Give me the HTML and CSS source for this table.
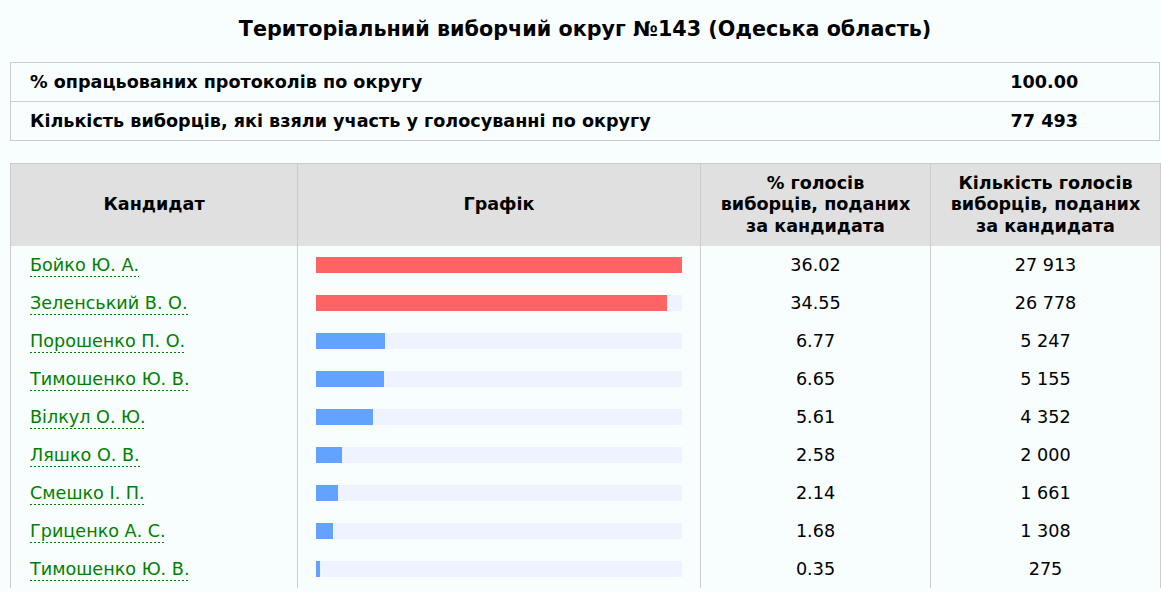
FILE: index.html
```html
<!DOCTYPE html>
<html lang="uk">
<head>
<meta charset="utf-8">
<title>Територіальний виборчий округ №143</title>
<link rel="stylesheet" href="styles.css">
</head>
<body>
<div class="page">
  <h1 class="title">Територіальний виборчий округ №143 (Одеська область)</h1>
  <table class="summary">
    <colgroup><col class="col-label"><col class="col-value"></colgroup>
    <tr><td class="s-label">% опрацьованих протоколів по округу</td><td class="s-value">100.00</td></tr>
    <tr><td class="s-label">Кількість виборців, які взяли участь у голосуванні по округу</td><td class="s-value">77 493</td></tr>
  </table>
  <table class="results">
    <colgroup>
      <col class="col-name">
      <col class="col-chart">
      <col class="col-pct">
      <col class="col-cnt">
    </colgroup>
    <thead>
      <tr>
        <th>Кандидат</th>
        <th>Графік</th>
        <th>% голосів<br>виборців, поданих<br>за кандидата</th>
        <th>Кількість голосів<br>виборців, поданих<br>за кандидата</th>
      </tr>
    </thead>
    <tbody>
      <tr><td class="c-name"><a class="cand">Бойко Ю. А.</a></td><td class="c-chart"><div class="track"><div class="fill red" style="width:100%"></div></div></td><td>36.02</td><td>27 913</td></tr>
      <tr><td class="c-name"><a class="cand">Зеленський В. О.</a></td><td class="c-chart"><div class="track"><div class="fill red" style="width:95.92%"></div></div></td><td>34.55</td><td>26 778</td></tr>
      <tr><td class="c-name"><a class="cand">Порошенко П. О.</a></td><td class="c-chart"><div class="track"><div class="fill blue" style="width:18.8%"></div></div></td><td>6.77</td><td>5 247</td></tr>
      <tr><td class="c-name"><a class="cand">Тимошенко Ю. В.</a></td><td class="c-chart"><div class="track"><div class="fill blue" style="width:18.46%"></div></div></td><td>6.65</td><td>5 155</td></tr>
      <tr><td class="c-name"><a class="cand">Вілкул О. Ю.</a></td><td class="c-chart"><div class="track"><div class="fill blue" style="width:15.57%"></div></div></td><td>5.61</td><td>4 352</td></tr>
      <tr><td class="c-name"><a class="cand">Ляшко О. В.</a></td><td class="c-chart"><div class="track"><div class="fill blue" style="width:7.16%"></div></div></td><td>2.58</td><td>2 000</td></tr>
      <tr><td class="c-name"><a class="cand">Смешко І. П.</a></td><td class="c-chart"><div class="track"><div class="fill blue" style="width:5.94%"></div></div></td><td>2.14</td><td>1 661</td></tr>
      <tr><td class="c-name"><a class="cand">Гриценко А. С.</a></td><td class="c-chart"><div class="track"><div class="fill blue" style="width:4.66%"></div></div></td><td>1.68</td><td>1 308</td></tr>
      <tr><td class="c-name"><a class="cand">Тимошенко Ю. В.</a></td><td class="c-chart"><div class="track"><div class="fill blue" style="width:0.97%"></div></div></td><td>0.35</td><td>275</td></tr>
    </tbody>
  </table>
</div>
</body>
</html>
```
FILE: styles.css
```css
html, body {
  margin: 0;
  padding: 0;
  background: #f8fdfe;
}
body {
  font-family: "DejaVu Sans", Verdana, sans-serif;
  color: #000;
  font-size: 17.6px;
}
.page {
  padding: 0 1px 0 10px;
}
.title {
  margin: 0;
  padding: 17px 0 0;
  height: 62px;
  box-sizing: border-box;
  text-align: center;
  font-size: 20.7px;
  line-height: 24px;
  font-weight: bold;
}
.summary {
  width: 100%;
  border-collapse: collapse;
  table-layout: fixed;
  border: 1px solid #cccccc;
}
.col-value { width: 230px; }
.summary td {
  border-top: 1px solid #cccccc;
  border-bottom: 1px solid #cccccc;
  height: 38px;
  padding: 0 0 0 19px;
  font-weight: bold;
  line-height: 20px;
  white-space: nowrap;
}
.summary td.s-value {
  padding: 0;
  text-align: center;
}
.results {
  width: 100%;
  border-collapse: collapse;
  margin-top: 22px;
  table-layout: fixed;
}
.col-name { width: 287px; }
.col-chart { width: 403px; }
.col-pct { width: 230px; }
.col-cnt { width: 230px; }
.results th {
  background: #e0e0e0;
  border: 1px solid #cccccc;
  border-bottom: none;
  height: 82px;
  padding: 0;
  font-weight: bold;
  line-height: 21.5px;
  text-align: center;
  white-space: nowrap;
}
.results tbody tr {
  height: 38px;
}
.results td {
  border-left: 1px solid #cccccc;
  border-right: 1px solid #cccccc;
  padding: 0;
  line-height: 20px;
  text-align: center;
  white-space: nowrap;
}
.results td.c-name {
  text-align: left;
  padding-left: 19px;
}
.results td.c-chart {
  padding: 0 18px 0 18px;
}
.cand {
  color: #008000;
  text-decoration: none;
  cursor: pointer;
  padding-bottom: 2px;
  background-image: repeating-linear-gradient(to right, #008000 0 2px, transparent 2px 4px);
  background-size: 100% 1px;
  background-position: left bottom;
  background-repeat: no-repeat;
}
.track {
  height: 16px;
  margin-top: -1px;
  background: #eef3ff;
  display: flex;
}
.fill {
  height: 100%;
}
.fill.red { background: #ff6464; }
.fill.blue { background: #62a3ff; }
```
